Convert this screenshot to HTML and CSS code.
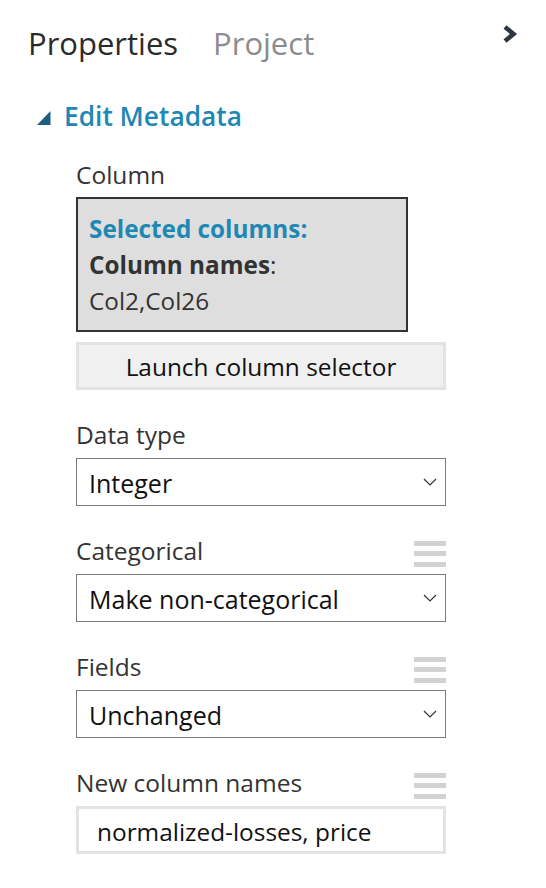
FILE: index.html
```html
<!DOCTYPE html>
<html lang="en">
<head>
<meta charset="utf-8">
<title>Properties</title>
<link rel="stylesheet" href="styles.css">
</head>
<body>
<div class="panel">
  <div class="tabs">
    <span class="tab tab-active">Properties</span>
    <span class="tab tab-inactive">Project</span>
    <svg class="collapse" width="16" height="20" viewBox="0 0 16 20"><polyline points="3,3 11.5,10 3,17" fill="none" stroke="#2f3642" stroke-width="4.6" stroke-linejoin="miter"/></svg>
  </div>

  <div class="section-head">
    <svg class="tri" width="14" height="14" viewBox="0 0 14 14"><polygon points="13.5,0 13.5,14 0,14" fill="#1f5e80"/></svg>
    <span class="section-title">Edit Metadata</span>
  </div>

  <div class="fields">
    <div class="label-row"><span class="label">Column</span></div>
    <div class="colbox">
      <div class="colbox-line sel">Selected columns:</div>
      <div class="colbox-line"><b>Column names</b>:</div>
      <div class="colbox-line">Col2,Col26</div>
    </div>
    <div class="btn">Launch column selector</div>

    <div class="label-row gap-top"><span class="label">Data type</span></div>
    <div class="select"><span>Integer</span><svg class="caret" width="14" height="8" viewBox="0 0 14 8"><polyline points="1,1 7,7 13,1" fill="none" stroke="#333" stroke-width="1.2"/></svg></div>

    <div class="label-row gap-top"><span class="label">Categorical</span><span class="menu"><i></i><i></i><i></i></span></div>
    <div class="select"><span>Make non-categorical</span><svg class="caret" width="14" height="8" viewBox="0 0 14 8"><polyline points="1,1 7,7 13,1" fill="none" stroke="#333" stroke-width="1.2"/></svg></div>

    <div class="label-row gap-top"><span class="label">Fields</span><span class="menu"><i></i><i></i><i></i></span></div>
    <div class="select"><span>Unchanged</span><svg class="caret" width="14" height="8" viewBox="0 0 14 8"><polyline points="1,1 7,7 13,1" fill="none" stroke="#333" stroke-width="1.2"/></svg></div>

    <div class="label-row gap-top"><span class="label">New column names</span><span class="menu"><i></i><i></i><i></i></span></div>
    <div class="textbox">normalized-losses, price</div>
  </div>
</div>
</body>
</html>
```

FILE: styles.css
```css
html, body {
  margin: 0;
  padding: 0;
  background: #ffffff;
}

body {
  font-family: "Open Sans", "Noto Sans", sans-serif;
  color: #333333;
  width: 546px;
  height: 888px;
  overflow: hidden;
}

.panel {
  display: flex;
  flex-direction: column;
}

.tabs {
  display: flex;
  align-items: flex-start;
  padding: 23px 28px 0 28px;
  height: 40px;
}

.tab {
  font-size: 31px;
  line-height: 40px;
}

.tab-active {
  color: #2b2b2b;
}

.tab-inactive {
  color: #8c8c8c;
  margin-left: 35px;
}

.collapse {
  margin-left: auto;
  margin-top: 1px;
}

.section-head {
  display: flex;
  align-items: center;
  margin-top: 36px;
  padding-left: 37px;
  height: 34px;
}

.tri {
  margin-top: 4px;
}

.section-title {
  margin-left: 13px;
  font-size: 26.3px;
  font-weight: 600;
  line-height: 34px;
  color: #1e88b5;
}

.fields {
  display: flex;
  flex-direction: column;
  margin-left: 76px;
  width: 370px;
  margin-top: 27px;
}

.label-row {
  display: flex;
  align-items: center;
  justify-content: space-between;
  height: 30px;
}

.gap-top {
  margin-top: 30px;
}

.label {
  font-size: 24.5px;
  line-height: 30px;
  color: #333333;
}

.menu {
  display: flex;
  flex-direction: column;
  gap: 5.5px;
  width: 32px;
  margin-top: 5px;
}

.menu i {
  display: block;
  height: 5px;
  background: #d2d2d2;
}

.colbox {
  margin-top: 7px;
  width: 332px;
  box-sizing: border-box;
  border: 2px solid #333333;
  background: #dedede;
  padding: 12px 10px 11px 11px;
}

.colbox-line {
  font-size: 24.3px;
  line-height: 36px;
  color: #333333;
}

.colbox-line.sel {
  font-weight: 700;
  color: #1e88b5;
}

.colbox-line b {
  font-weight: 700;
}

.btn {
  margin-top: 10px;
  height: 48px;
  box-sizing: border-box;
  border: 3px solid #e3e3e3;
  background: #f0f0f0;
  display: flex;
  align-items: center;
  justify-content: center;
  font-size: 24.4px;
  color: #111111;
}

.select {
  margin-top: 8px;
  height: 48px;
  box-sizing: border-box;
  border: 1px solid #7a7a7a;
  display: flex;
  align-items: center;
  justify-content: space-between;
  padding: 2px 8px 0 12px;
  font-size: 25px;
  color: #111111;
}

.caret {
  margin-top: -2px;
}

.textbox {
  margin-top: 8px;
  height: 48px;
  box-sizing: border-box;
  border: 3px solid #e3e3e3;
  display: flex;
  align-items: center;
  padding: 2px 0 0 18px;
  font-size: 24.4px;
  color: #111111;
}
```
